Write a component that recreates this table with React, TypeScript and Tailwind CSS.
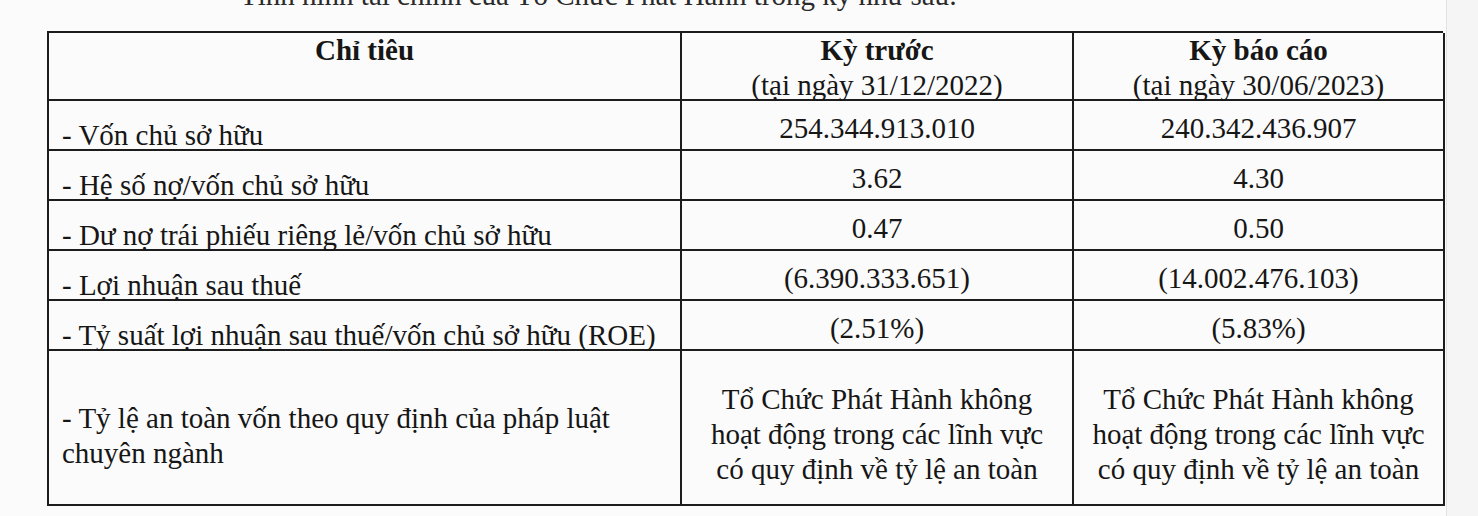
const rows: { label: string; prev: string; curr: string }[] = [
  { label: "- Vốn chủ sở hữu", prev: "254.344.913.010", curr: "240.342.436.907" },
  { label: "- Hệ số nợ/vốn chủ sở hữu", prev: "3.62", curr: "4.30" },
  { label: "- Dư nợ trái phiếu riêng lẻ/vốn chủ sở hữu", prev: "0.47", curr: "0.50" },
  { label: "- Lợi nhuận sau thuế", prev: "(6.390.333.651)", curr: "(14.002.476.103)" },
  { label: "- Tỷ suất lợi nhuận sau thuế/vốn chủ sở hữu (ROE)", prev: "(2.51%)", curr: "(5.83%)" },
];

function SafetyNote() {
  return (
    <div className="h-[155px] whitespace-nowrap border-b-2 border-r-2 border-[#1c1c1c] pt-[31px] text-center leading-[35px]">
      Tổ Chức Phát Hành không
      <br />
      hoạt động trong các lĩnh vực
      <br />
      có quy định về tỷ lệ an toàn
    </div>
  );
}

export default function App() {
  return (
    <div className="flex h-[516px] w-[1478px] overflow-hidden bg-[#fbfbfb] font-['Liberation_Serif','Times_New_Roman',serif] text-[29px] text-[#161616]">
      <div className="flex w-[1446px] flex-col pl-[47px]">
        <p className="-mt-[21px] h-[32px] whitespace-nowrap pl-[193px] leading-[32px] text-[#2a2a2a]">
          Tình hình tài chính của Tổ Chức Phát Hành trong kỳ như sau:
        </p>
        <div className="mt-[20px] grid w-[1396px] grid-cols-[633px_392px_371px] border-l-2 border-t-2 border-[#1c1c1c]">
          <div className="h-[68px] border-b-2 border-r-2 border-[#1c1c1c] text-center font-bold leading-[35px]">
            Chỉ tiêu
          </div>
          <div className="h-[68px] border-b-2 border-r-2 border-[#1c1c1c] text-center leading-[35px]">
            <span className="font-bold">Kỳ trước</span>
            <br />
            (tại ngày 31/12/2022)
          </div>
          <div className="h-[68px] border-b-2 border-r-2 border-[#1c1c1c] text-center leading-[35px]">
            <span className="font-bold">Kỳ báo cáo</span>
            <br />
            (tại ngày 30/06/2023)
          </div>

          {rows.map((r) => (
            <div key={r.label} className="contents">
              <div className="h-[50px] whitespace-nowrap border-b-2 border-r-2 border-[#1c1c1c] pl-[13px] pt-[18px] leading-[32px]">
                {r.label}
              </div>
              <div className="h-[50px] border-b-2 border-r-2 border-[#1c1c1c] pt-[11px] text-center leading-[32px]">
                {r.prev}
              </div>
              <div className="h-[50px] border-b-2 border-r-2 border-[#1c1c1c] pt-[11px] text-center leading-[32px]">
                {r.curr}
              </div>
            </div>
          ))}

          <div className="h-[155px] border-b-2 border-r-2 border-[#1c1c1c] pl-[13px] pt-[50px] leading-[35px]">
            - Tỷ lệ an toàn vốn theo quy định của pháp luật
            <br />
            chuyên ngành
          </div>
          <SafetyNote />
          <SafetyNote />
        </div>
      </div>
      <div className="flex-1 border-l border-[#e2e2e2] bg-[#f5f5f5]" />
    </div>
  );
}
